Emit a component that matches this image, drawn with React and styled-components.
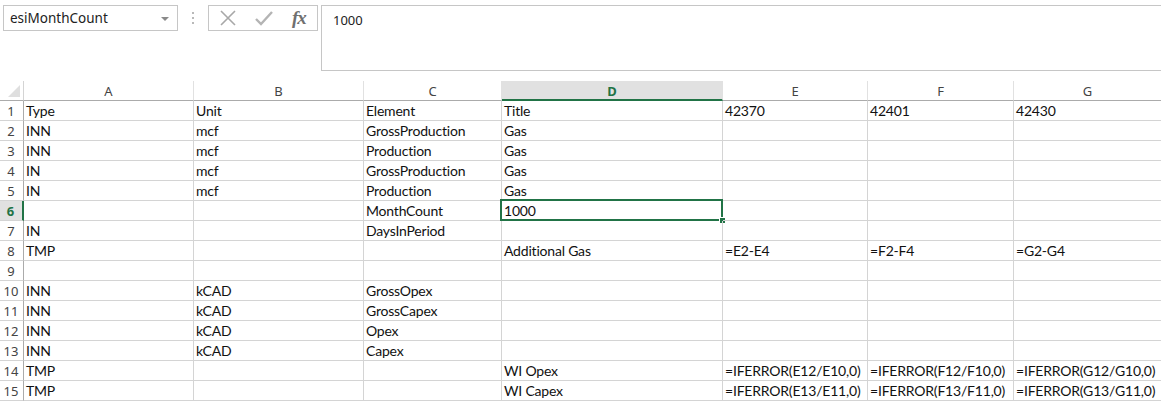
import React from "react";
import styled, { createGlobalStyle } from "styled-components";

const GlobalStyle = createGlobalStyle`
  html, body {
    margin: 0;
    padding: 0;
    background: #fff;
    overflow: hidden;
  }
  body {
    font-family: "Lato", "Liberation Sans", sans-serif;
  }
`;

const GREEN = "#217346";
const COLS = [24, 170, 170, 138, 221, 145, 146, 148];
const LETTERS = ["A", "B", "C", "D", "E", "F", "G"];
const SELECTED_COL = 3;
const SELECTED_ROW = 6;

const rows = [
  ["Type", "Unit", "Element", "Title", "42370", "42401", "42430"],
  ["INN", "mcf", "GrossProduction", "Gas"],
  ["INN", "mcf", "Production", "Gas"],
  ["IN", "mcf", "GrossProduction", "Gas"],
  ["IN", "mcf", "Production", "Gas"],
  ["", "", "MonthCount", "1000"],
  ["IN", "", "DaysInPeriod"],
  ["TMP", "", "", "Additional Gas", "=E2-E4", "=F2-F4", "=G2-G4"],
  [],
  ["INN", "kCAD", "GrossOpex"],
  ["INN", "kCAD", "GrossCapex"],
  ["INN", "kCAD", "Opex"],
  ["INN", "kCAD", "Capex"],
  ["TMP", "", "", "WI Opex", "=IFERROR(E12/E10,0)", "=IFERROR(F12/F10,0)", "=IFERROR(G12/G10,0)"],
  ["TMP", "", "", "WI Capex", "=IFERROR(E13/E11,0)", "=IFERROR(F13/F11,0)", "=IFERROR(G13/G11,0)"],
];

const TopBar = styled.div`
  display: flex;
  align-items: flex-start;
  padding: 5px 0 0 3px;
  height: 76px;
  box-sizing: border-box;
`;

const NameBox = styled.div`
  width: 175px;
  height: 26px;
  box-sizing: border-box;
  border: 1px solid #c6c6c6;
  display: flex;
  align-items: center;
  justify-content: space-between;
  padding: 0 8px 0 6px;
  font-family: "Noto Sans", "Liberation Sans", sans-serif;
  font-size: 13.5px;
  color: #222;
`;

const Caret = styled.span`
  width: 0;
  height: 0;
  border-left: 4px solid transparent;
  border-right: 4px solid transparent;
  border-top: 4px solid #8a8a8a;
  margin-top: 1px;
`;

const Dots = styled.div`
  width: 30px;
  height: 26px;
  display: flex;
  flex-direction: column;
  align-items: center;
  justify-content: center;
  gap: 3px;
  span {
    width: 2px;
    height: 2px;
    background: #b9b9b9;
  }
`;

const FxBox = styled.div`
  width: 110px;
  height: 26px;
  box-sizing: border-box;
  border: 1px solid #c6c6c6;
  display: flex;
  align-items: center;
  padding: 0 0 0 10px;
  gap: 17px;
`;

const Fx = styled.span`
  font-family: "Liberation Serif", "DejaVu Serif", serif;
  font-style: italic;
  font-weight: 700;
  font-size: 19px;
  color: #707070;
  letter-spacing: -1px;
  margin-left: 1px;
`;

const FormulaBar = styled.div`
  flex: 1;
  margin-left: 3px;
  height: 66px;
  box-sizing: border-box;
  border: 1px solid #c6c6c6;
  border-right: none;
  padding: 5px 11px;
  font-family: "Noto Sans", "Liberation Sans", sans-serif;
  font-size: 13px;
  color: #222;
`;

const Sheet = styled.div`
  display: grid;
  grid-template-columns: ${COLS.map((c) => `${c}px`).join(" ")};
  grid-auto-rows: 20px;
  margin-top: 5px;
  font-size: 14px;
  letter-spacing: -0.2px;
  color: #111;
`;

const Corner = styled.div`
  border-right: 1px solid #d4d4d4;
  border-bottom: 1px solid #ababab;
  position: relative;
  overflow: hidden;
  &::after {
    content: "";
    position: absolute;
    right: 3px;
    bottom: 3px;
    border-left: 12px solid transparent;
    border-bottom: 12px solid #dfdfdf;
  }
`;

const ColHead = styled.div`
  box-sizing: border-box;
  display: flex;
  align-items: center;
  justify-content: center;
  font-family: "Noto Sans", "Liberation Sans", sans-serif;
  font-size: 13px;
  letter-spacing: 0;
  padding-top: 1px;
  border-right: 1px solid #e1e1e1;
  border-bottom: ${(p) => (p.$active ? `2px solid ${GREEN}` : "1px solid #ababab")};
  background: ${(p) => (p.$active ? "#e1e1e1" : "#fff")};
  color: ${(p) => (p.$active ? GREEN : "#444")};
  font-weight: ${(p) => (p.$active ? 700 : 400)};
`;

const RowHead = styled.div`
  box-sizing: border-box;
  display: flex;
  align-items: center;
  justify-content: center;
  font-family: "Noto Sans", "Liberation Sans", sans-serif;
  font-size: 13px;
  letter-spacing: 0;
  padding-right: 1px;
  border-bottom: 1px solid #d4d4d4;
  border-right: ${(p) => (p.$active ? `2px solid ${GREEN}` : "1px solid #ababab")};
  background: ${(p) => (p.$active ? "#e1e1e1" : "#fff")};
  color: ${(p) => (p.$active ? GREEN : "#444")};
  font-weight: ${(p) => (p.$active ? 700 : 400)};
`;

const Cell = styled.div`
  box-sizing: border-box;
  position: relative;
  border-right: 1px solid #d4d4d4;
  border-bottom: 1px solid #d4d4d4;
  padding: 0 0 0 2px;
  line-height: 19px;
  white-space: nowrap;
  overflow: visible;
`;

const Selection = styled.div`
  position: absolute;
  left: -2px;
  top: -2px;
  right: -1px;
  bottom: -1px;
  border: 2px solid ${GREEN};
  pointer-events: none;
  &::after {
    content: "";
    position: absolute;
    right: -4px;
    bottom: -4px;
    width: 5px;
    height: 5px;
    background: ${GREEN};
    border-left: 1px solid #fff;
    border-top: 1px solid #fff;
  }
`;

const CancelIcon = () => (
  <svg width="18" height="18" viewBox="0 0 18 18">
    <path d="M2 2 L16 16 M16 2 L2 16" stroke="#a8a8a8" strokeWidth="1.6" fill="none" />
  </svg>
);

const EnterIcon = () => (
  <svg width="20" height="18" viewBox="0 0 20 18">
    <path d="M2 10 L7 15 L18 3" stroke="#b4b4b4" strokeWidth="2.4" fill="none" />
  </svg>
);

export default function App() {
  return (
    <>
      <GlobalStyle />
      <TopBar>
        <NameBox>
          esiMonthCount
          <Caret />
        </NameBox>
        <Dots>
          <span />
          <span />
          <span />
        </Dots>
        <FxBox>
          <CancelIcon />
          <EnterIcon />
          <Fx>fx</Fx>
        </FxBox>
        <FormulaBar>1000</FormulaBar>
      </TopBar>
      <Sheet>
        <Corner />
        {LETTERS.map((l, i) => (
          <ColHead key={l} $active={i === SELECTED_COL}>
            {l}
          </ColHead>
        ))}
        {rows.map((row, r) => (
          <React.Fragment key={r}>
            <RowHead $active={r + 1 === SELECTED_ROW}>{r + 1}</RowHead>
            {LETTERS.map((l, c) => (
              <Cell key={l}>
                {row[c] || ""}
                {r + 1 === SELECTED_ROW && c === SELECTED_COL && <Selection />}
              </Cell>
            ))}
          </React.Fragment>
        ))}
      </Sheet>
    </>
  );
}
